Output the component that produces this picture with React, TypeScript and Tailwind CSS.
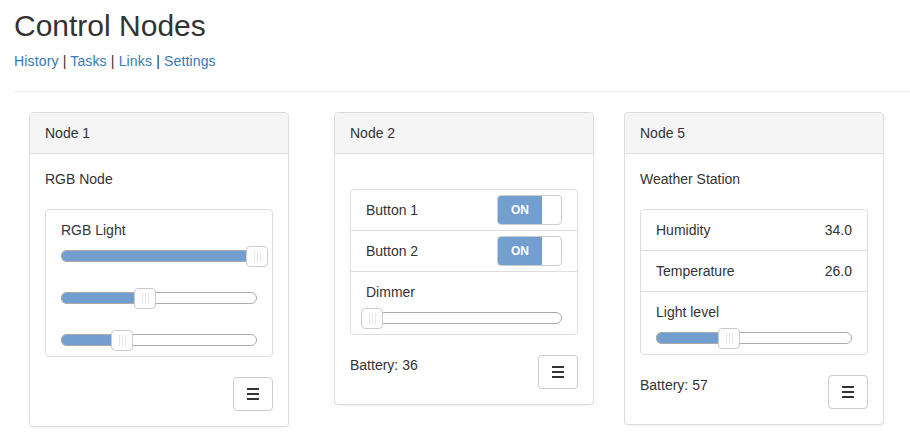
import React from 'react';

type Slider = { value: number; filled?: boolean };

function MenuIcon() {
  return (
    <svg width="12" height="12" viewBox="0 0 12 12" fill="#333">
      <rect x="0" y="0" width="12" height="2" />
      <rect x="0" y="5" width="12" height="2" />
      <rect x="0" y="10" width="12" height="2" />
    </svg>
  );
}

function MenuButton() {
  return (
    <button className="ml-auto flex h-[34px] w-[40px] shrink-0 items-center justify-center rounded border border-[#ccc] bg-white">
      <MenuIcon />
    </button>
  );
}

function RangeSlider({ value, filled = true }: Slider) {
  // handle left edge in px inside a 196px track (offset by the 1px border)
  const left = Math.round(value * 1.96 - 6);
  return (
    <div className="relative h-[12px] w-[196px] rounded-full border border-[#aaa] bg-white">
      {filled && (
        <div
          className="absolute -left-px -top-px h-[12px] rounded-l-full border border-[#aaa] border-r-0 bg-[#729fcf]"
          style={{ width: left + 12 }}
        />
      )}
      <div
        className="absolute top-[-5px] flex h-[21px] w-[22px] items-center justify-center gap-[2px] rounded border border-[#ccc] bg-white"
        style={{ left }}
      >
        <span className="h-[11px] w-px bg-[#e6e6e6]" />
        <span className="h-[11px] w-px bg-[#e6e6e6]" />
        <span className="h-[11px] w-px bg-[#e6e6e6]" />
      </div>
    </div>
  );
}

function Toggle() {
  return (
    <div className="flex h-[30px] w-[65px] overflow-hidden rounded border border-[#ccc] bg-white">
      <div className="flex w-[44px] items-center justify-center bg-[#729fcf] text-[12px] font-bold text-white">
        ON
      </div>
    </div>
  );
}

function Card({
  title,
  name,
  children,
  battery,
}: {
  title: string;
  name: string;
  children: React.ReactNode;
  battery?: number;
}) {
  return (
    <div className="w-[260px] shrink-0 rounded border border-[#ddd] bg-white shadow-[0_1px_1px_rgba(0,0,0,0.05)]">
      <div className="rounded-t border-b border-[#ddd] bg-[#f5f5f5] px-[15px] py-[10px]">{title}</div>
      <div className="p-[15px]">
        <div className="mb-5">{name}</div>
        <div className="rounded border border-[#ddd]">{children}</div>
        <div className="mt-5 flex items-start">
          {battery !== undefined && <div>Battery: {battery}</div>}
          <MenuButton />
        </div>
      </div>
    </div>
  );
}

export default function App() {
  const links = ['History', 'Tasks', 'Links', 'Settings'];

  return (
    <div className="min-h-screen bg-white font-['Liberation_Sans',Arial,sans-serif] text-[14px] leading-5 text-[#333]">
      <div className="pl-[14px]">
        <h1 className="pt-[9px] text-[30px] leading-[33px]">Control Nodes</h1>
        <div className="mt-[9px] tracking-[0.15px]">
          {links.map((l, i) => (
            <span key={l}>
              {i > 0 && ' | '}
              <a className="text-[#337ab7]" href="#">
                {l}
              </a>
            </span>
          ))}
        </div>
        <hr className="mt-5 border-[#eee]" />

        <div className="mt-5 flex items-start pl-[15px]">
          <Card title="Node 1" name="RGB Node">
            <div className="px-[15px] py-[10px]">
              <div>RGB Light</div>
              <div className="mt-[10px]">
                <RangeSlider value={97} />
              </div>
              <div className="mt-[30px]">
                <RangeSlider value={40} />
              </div>
              <div className="mt-[30px]">
                <RangeSlider value={28} />
              </div>
            </div>
          </Card>

          <div className="ml-[45px]">
            <Card title="Node 2" name="" battery={36}>
              <div className="flex items-center justify-between border-b border-[#ddd] py-[5px] pl-[15px] pr-[15px]">
                <span>Button 1</span>
                <Toggle />
              </div>
              <div className="flex items-center justify-between border-b border-[#ddd] py-[5px] pl-[15px] pr-[15px]">
                <span>Button 2</span>
                <Toggle />
              </div>
              <div className="px-[15px] py-[10px]">
                <div>Dimmer</div>
                <div className="mt-[10px]">
                  <RangeSlider value={0} filled={false} />
                </div>
              </div>
            </Card>
          </div>

          <div className="ml-[30px]">
            <Card title="Node 5" name="Weather Station" battery={57}>
              <div className="flex justify-between border-b border-[#ddd] px-[15px] py-[10px]">
                <span>Humidity</span>
                <span>34.0</span>
              </div>
              <div className="flex justify-between border-b border-[#ddd] px-[15px] py-[10px]">
                <span>Temperature</span>
                <span>26.0</span>
              </div>
              <div className="px-[15px] py-[10px]">
                <div>Light level</div>
                <div className="mt-[10px]">
                  <RangeSlider value={34} />
                </div>
              </div>
            </Card>
          </div>
        </div>
      </div>
    </div>
  );
}
